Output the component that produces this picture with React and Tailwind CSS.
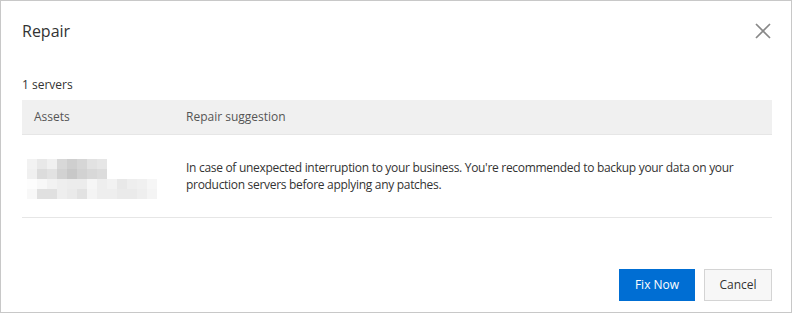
const topCells = [
  'bg-[#f2f2f2]', 'bg-[#e8e8e8]', 'bg-[#f0f0f0]', 'bg-[#d8d8d8]', 'bg-[#cfcfcf]', 'bg-[#d6d6d6]', 'bg-[#e2e2e2]', 'bg-[#e6e6e6]',
  'bg-[#f0f0f0]', 'bg-[#dcdcdc]', 'bg-[#e2e2e2]', 'bg-[#d2d2d2]', 'bg-[#c8c8c8]', 'bg-[#d2d2d2]', 'bg-[#d8d8d8]', 'bg-[#dcdcdc]',
];

const bottomCells = [
  'bg-[#fdfdfd]', 'bg-[#f8f8f8]', 'bg-[#f2f2f2]', 'bg-[#eeeeee]', 'bg-[#ececec]', 'bg-[#ececec]', 'bg-[#f6f6f6]', 'bg-[#eeeeee]', 'bg-[#f2f2f2]', 'bg-[#e8e8e8]', 'bg-[#eeeeee]', 'bg-[#f0f0f0]', 'bg-[#f6f6f6]',
  'bg-[#f8f8f8]', 'bg-[#e0e0e0]', 'bg-[#e0e0e0]', 'bg-[#eeeeee]', 'bg-[#eaeaea]', 'bg-[#e2e2e2]', 'bg-[#f4f4f4]', 'bg-[#eeeeee]', 'bg-[#eeeeee]', 'bg-[#eaeaea]', 'bg-[#eaeaea]', 'bg-[#eeeeee]', 'bg-[#f4f4f4]',
];

// blurred hostname placeholder
const Mosaic = () => (
  <div className="flex flex-col">
    <div className="grid grid-cols-[repeat(8,10px)]">
      {topCells.map((c, i) => (
        <div key={i} className={`h-[10px] ${c}`} />
      ))}
    </div>
    <div className="grid grid-cols-[repeat(13,10px)]">
      {bottomCells.map((c, i) => (
        <div key={i} className={`h-[10px] ${c}`} />
      ))}
    </div>
  </div>
);

const App = () => {
  return (
    <div className="flex h-[313px] w-[792px] flex-col border border-[#c8c8c8] bg-white font-['Open_Sans',sans-serif] text-[#333]">
      {/* Header */}
      <div className="flex h-[59px] items-center justify-between pl-[21px] pr-[20px]">
        <h1 className="text-[16px] font-normal text-[#333]">Repair</h1>
        <svg className="h-[16px] w-[16px] text-[#888]" viewBox="0 0 16 16" fill="none" stroke="currentColor" strokeWidth={1.7}>
          <path d="M1 1l14 14M15 1L1 15" />
        </svg>
      </div>

      {/* Body */}
      <div className="pl-[21px] pr-[19px]">
        <p className="mt-[15px] text-[12px] leading-[20px]">1 servers</p>
        <div className="mt-[5px]">
          <div className="flex h-[35px] items-center border-b border-[#e6e6e6] bg-[#f0f0f0] text-[12px] text-[#555]">
            <div className="w-[152px] pl-[12px]">Assets</div>
            <div className="pl-[12px]">Repair suggestion</div>
          </div>
          <div className="flex h-[83px] items-center border-b border-[#e6e6e6] text-[12px]">
            <div className="w-[152px] pl-[5px] pt-[6px]">
              <Mosaic />
            </div>
            <div className="flex-1 pl-[12px] pr-[20px] leading-[17px] tracking-[-0.3px]">
              In case of unexpected interruption to your business. You're recommended to backup your data on your production servers before applying any patches.
            </div>
          </div>
        </div>
      </div>

      {/* Footer */}
      <div className="mt-auto flex justify-end gap-[9px] pb-[11px] pr-[19px]">
        <button className="h-[32px] w-[76px] bg-[#006ed3] text-[12px] text-white">Fix Now</button>
        <button className="h-[32px] w-[68px] border border-[#d4d4d4] bg-[#f7f7f7] text-[12px] text-[#333]">Cancel</button>
      </div>
    </div>
  );
};

export default App;
